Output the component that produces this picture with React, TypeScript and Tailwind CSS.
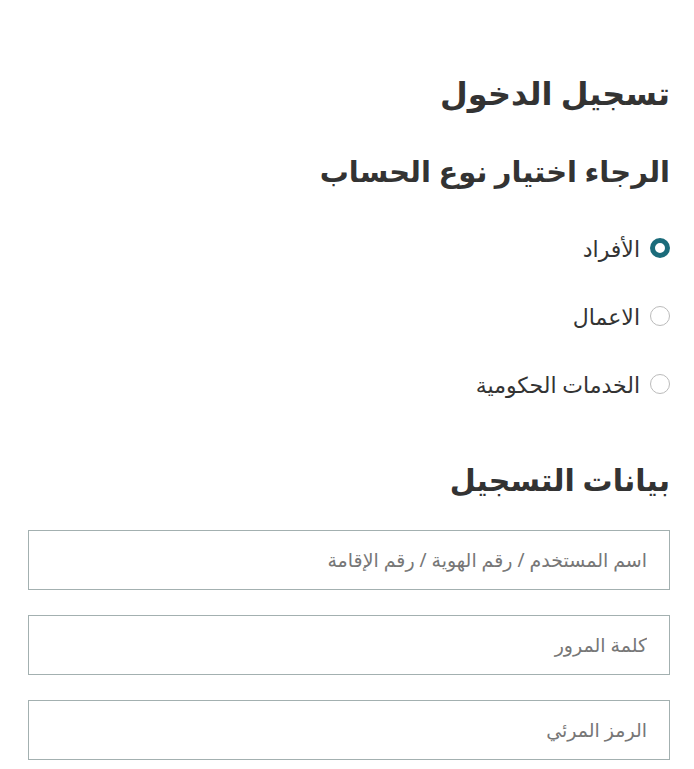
import { useState } from "react";

const types = ["الأفراد", "الاعمال", "الخدمات الحكومية"];

const fields = [
  "اسم المستخدم / رقم الهوية / رقم الإقامة",
  "كلمة المرور",
  "الرمز المرئي",
];

export default function App() {
  const [selected, setSelected] = useState(0);

  return (
    <div
      dir="rtl"
      className="min-h-screen bg-white pr-[24px] pl-[28px] pt-[70px] text-[#333]"
      style={{ fontFamily: '"Noto Sans", "DejaVu Sans", sans-serif' }}
    >
      <h1 className="text-[32px] font-semibold leading-[46px]">تسجيل الدخول</h1>
      <h2 className="mt-[35px] text-[29px] font-semibold leading-[40px]">
        الرجاء اختيار نوع الحساب
      </h2>

      <div className="mt-[44px] flex flex-col gap-[42px]">
        {types.map((t, i) => (
          <label key={t} className="flex cursor-pointer items-center gap-[10px]">
            <input
              type="radio"
              name="type"
              checked={selected === i}
              onChange={() => setSelected(i)}
              className="sr-only"
            />
            <span
              className={
                selected === i
                  ? "h-[20px] w-[20px] rounded-full border-[5px] border-[#1b6b7a] bg-white"
                  : "h-[20px] w-[20px] rounded-full border border-[#bbb] bg-white"
              }
            />
            <span className="text-[22px] leading-[26px] text-[#333]">{t}</span>
          </label>
        ))}
      </div>

      <h2 className="mt-[62px] text-[30px] font-semibold leading-[42px]">بيانات التسجيل</h2>

      <div className="mt-[29px] flex flex-col gap-[25px]">
        {fields.map((f) => (
          <input
            key={f}
            type="text"
            placeholder={f}
            className="h-[60px] w-full border border-[#a3b0b0] px-[22px] text-[19px] text-[#333] outline-none placeholder:text-[#777]"
          />
        ))}
      </div>
    </div>
  );
}
